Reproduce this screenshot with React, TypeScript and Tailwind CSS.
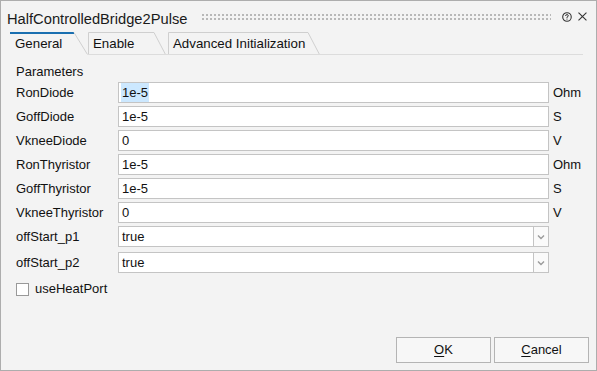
import React from "react";

function Tab({ label, width, slant, active }: { label: string; width: number; slant: number; active?: boolean }) {
  return (
    <div className="relative h-[23px] flex items-center" style={{ width }}>
      <svg className="absolute left-0 top-0" width={width} height={23}>
        {active ? (
          <>
            <line x1={0} y1={1} x2={width - slant} y2={1} stroke="#1a6fb0" strokeWidth={2} />
            <line x1={width - slant} y1={0.5} x2={width - 0.5} y2={22.5} stroke="#cfcfcf" strokeWidth={1} />
          </>
        ) : (
          <>
            <polyline
              points={`0.5,23 0.5,0.5 ${width - slant},0.5 ${width - 0.5},22.5`}
              fill="none"
              stroke="#cfcfcf"
              strokeWidth={1}
            />
            <line x1={0} y1={22.5} x2={width} y2={22.5} stroke="#dcdcdc" strokeWidth={1} />
          </>
        )}
      </svg>
      <span className="relative pl-[5px] text-[13.3px] text-[#111]">{label}</span>
    </div>
  );
}

function TextRow({ label, value, unit, selected }: { label: string; value: string; unit: string; selected?: boolean }) {
  return (
    <div className="flex h-[24px] items-start">
      <div className="w-[102px] h-[21px] flex items-center">{label}</div>
      <div className="w-[431px] h-[21px] border border-[#c4c4c4] bg-white flex items-center pl-[2px]">
        <span className={selected ? "bg-[#cce8ff] px-[1px]" : "px-[1px]"}>{value}</span>
      </div>
      <div className="ml-[4px] h-[21px] flex items-center">{unit}</div>
    </div>
  );
}

function SelectRow({ label, value }: { label: string; value: string }) {
  return (
    <div className="flex h-[26px] items-start">
      <div className="w-[102px] h-[21px] flex items-center">{label}</div>
      <div className="w-[431px] h-[21px] border border-[#c4c4c4] bg-white flex">
        <div className="flex-1 flex items-center pl-[3px]">{value}</div>
        <div className="w-[15px] border-l border-[#c4c4c4] flex items-center justify-center bg-[#fafafa]">
          <svg width="8" height="6" viewBox="0 0 8 6">
            <path d="M1 1.5 L4 4.5 L7 1.5" fill="none" stroke="#9a9a9a" strokeWidth="1.4" />
          </svg>
        </div>
      </div>
    </div>
  );
}

export default function App() {
  return (
    <div className="w-[597px] h-[371px] border border-[#adadad] bg-[#f3f3f3] flex flex-col font-['Liberation_Sans',Arial,sans-serif] text-[13px] text-[#111] overflow-hidden">
      {/* title bar */}
      <div className="h-[31px] flex items-center pl-[6px] pr-[9px]">
        <div className="pt-[6px] text-[14.7px] text-[#1a1a1a] whitespace-nowrap">HalfControlledBridge2Pulse</div>
        <svg className="ml-[15px]" width="351" height="8">
          <defs>
            <pattern id="dots" x="0" y="0" width="4" height="4" patternUnits="userSpaceOnUse">
              <rect x="0" y="1" width="2" height="2" fill="#b8b8b8" />
            </pattern>
          </defs>
          <rect x="0" y="0" width="351" height="8" fill="url(#dots)" />
        </svg>
        <svg className="ml-[11px]" width="10" height="10" viewBox="0 0 10 10">
          <circle cx="5" cy="5" r="4.3" fill="none" stroke="#333" strokeWidth="1.1" />
          <path d="M3.6 4 Q3.6 2.6 5 2.6 Q6.4 2.6 6.4 3.8 Q6.4 4.6 5 5.1 L5 5.9" fill="none" stroke="#333" strokeWidth="1" />
          <rect x="4.5" y="6.6" width="1" height="1" fill="#333" />
        </svg>
        <svg className="ml-[6px]" width="9" height="9" viewBox="0 0 9 9">
          <path d="M0.5 0.5 L8.5 8.5 M8.5 0.5 L0.5 8.5" stroke="#333" strokeWidth="1.1" />
        </svg>
      </div>

      {/* tabs */}
      <div className="flex h-[23px] pl-[9px] pr-[13px]">
        <Tab label="General" width={78} slant={14} active />
        <Tab label="Enable" width={78} slant={12} />
        <div className="w-[2px] h-[23px] border-b border-[#dcdcdc]" />
        <Tab label="Advanced Initialization" width={152} slant={12} />
        <div className="flex-1 h-[23px] border-b border-[#dcdcdc]" />
      </div>

      {/* content */}
      <div className="flex-1 flex flex-col pl-[15px] pt-[6px]">
        <div className="h-[21px] flex items-center">Parameters</div>
        <TextRow label="RonDiode" value="1e-5" unit="Ohm" selected />
        <TextRow label="GoffDiode" value="1e-5" unit="S" />
        <TextRow label="VkneeDiode" value="0" unit="V" />
        <TextRow label="RonThyristor" value="1e-5" unit="Ohm" />
        <TextRow label="GoffThyristor" value="1e-5" unit="S" />
        <TextRow label="VkneeThyristor" value="0" unit="V" />
        <SelectRow label="offStart_p1" value="true" />
        <SelectRow label="offStart_p2" value="true" />
        <div className="flex items-center h-[20px] mt-[1px]">
          <div className="w-[13px] h-[13px] border border-[#999] bg-white" />
          <span className="ml-[6px]">useHeatPort</span>
        </div>
      </div>

      {/* buttons */}
      <div className="flex justify-end gap-[3px] pr-[7px] pb-[7px]">
        <button className="w-[95px] h-[26px] border border-[#b4b4b4] bg-[#f7f7f7] text-[13px]">
          <span className="underline underline-offset-2">O</span>K
        </button>
        <button className="w-[95px] h-[26px] border border-[#b4b4b4] bg-[#f7f7f7] text-[13px]">
          <span className="underline underline-offset-2">C</span>ancel
        </button>
      </div>
    </div>
  );
}
